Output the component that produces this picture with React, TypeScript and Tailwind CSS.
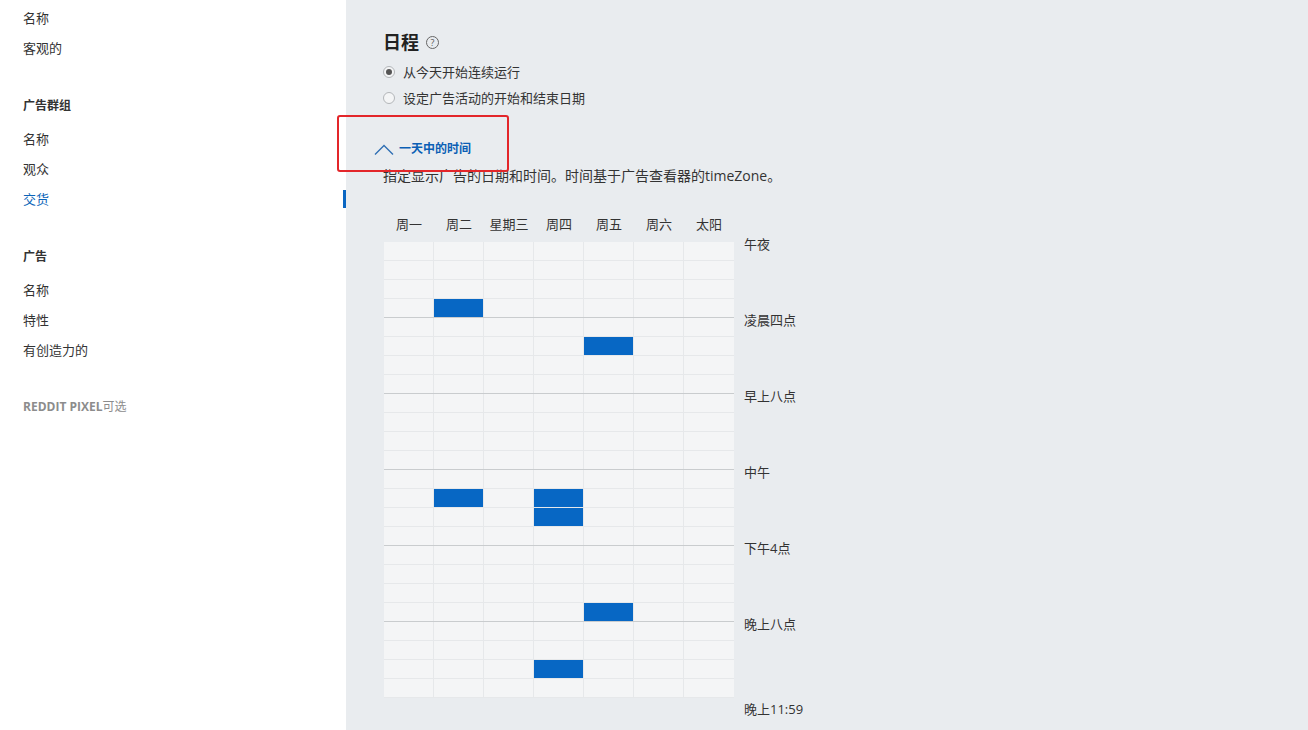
import React from "react";

const DAYS = ["周一", "周二", "星期三", "周四", "周五", "周六", "太阳"];
const TIMES = ["午夜", "凌晨四点", "早上八点", "中午", "下午4点", "晚上八点"];

// [row, day] of the selected hour slots
const SELECTED = new Set(["3-1", "5-4", "13-1", "13-3", "14-3", "19-4", "22-3"]);

function NavItem({ label, active }: { label: string; active?: boolean }) {
  return (
    <div className="flex items-center justify-between leading-[30px]">
      <span className={active ? "text-[#0b64b8]" : "text-[#333]"}>{label}</span>
      {active && <span className="h-[18px] w-[3px] bg-[#0a66c2]" />}
    </div>
  );
}

function NavHeading({ label }: { label: string }) {
  return <div className="mt-[28px] mb-[3px] text-[12px] font-bold leading-[30px] text-[#333]">{label}</div>;
}

function Radio({ checked, label }: { checked?: boolean; label: string }) {
  return (
    <label className="flex items-center gap-[8px] leading-[26px] text-[#333]">
      <span className="flex h-[12px] w-[12px] items-center justify-center rounded-full border border-[#b3b6b9] bg-[#f4f5f6]">
        {checked && <span className="h-[6px] w-[6px] rounded-full bg-[#555]" />}
      </span>
      {label}
    </label>
  );
}

function Sidebar() {
  return (
    <aside className="w-[346px] shrink-0 bg-white pl-[23px] pt-[3px] text-[13px]">
      <NavItem label="名称" />
      <NavItem label="客观的" />
      <NavHeading label="广告群组" />
      <NavItem label="名称" />
      <NavItem label="观众" />
      <NavItem label="交货" active />
      <NavHeading label="广告" />
      <NavItem label="名称" />
      <NavItem label="特性" />
      <NavItem label="有创造力的" />
      <div className="mt-[27px] text-[12px] font-bold leading-[30px] text-[#8c8c8c]">
        REDDIT PIXEL<span className="font-normal">可选</span>
      </div>
    </aside>
  );
}

function ScheduleGrid() {
  return (
    <div className="ml-[1px] flex gap-[10px]">
      <div className="w-[350px]">
        {Array.from({ length: 24 }, (_, row) => (
          <div
            key={row}
            className={
              "flex border-b " +
              (row % 4 === 3 && row < 23 ? "border-[#c9ccce]" : "border-[#e6e8ea]")
            }
          >
            {DAYS.map((_, day) => (
              <div
                key={day}
                className={
                  "h-[18px] w-[50px] border-r border-[#e6e8ea] last:border-r-0 " +
                  (SELECTED.has(`${row}-${day}`) ? "bg-[#0767c4]" : "bg-[#f4f5f6]")
                }
              />
            ))}
          </div>
        ))}
      </div>
      <div className="-mt-[8px] text-[13px] leading-[20px] text-[#333]">
        {TIMES.map((t) => (
          <div key={t} className="h-[76px]">
            {t}
          </div>
        ))}
        <div className="mt-[9px]">晚上11:59</div>
      </div>
    </div>
  );
}

export default function App() {
  return (
    <div
      className="relative flex h-[730px] w-full overflow-hidden"
      style={{ fontFamily: '"Open Sans", "Noto Sans CJK SC", sans-serif' }}
    >
      <Sidebar />
      <main className="flex-1 bg-[#e9ecef] pl-[37px] pt-[28px] text-[13px] text-[#333]">
        <div className="flex items-center gap-[7px]">
          <h1 className="text-[18px] font-bold leading-[28px] text-[#222]">日程</h1>
          <span className="mt-[1px] flex h-[13px] w-[13px] items-center justify-center rounded-full border border-[#666] text-[9px] leading-none text-[#555]">
            ?
          </span>
        </div>
        <div className="mt-[3px]">
          <Radio checked label="从今天开始连续运行" />
          <Radio label="设定广告活动的开始和结束日期" />
        </div>
        <button className="-ml-[9px] mt-[28px] flex items-center gap-[5px] text-[12px] font-bold leading-[20px] text-[#0b5fb5]">
          <svg width="20" height="11" viewBox="0 0 20 11" fill="none">
            <polyline points="1,10.5 10,1.5 19,10.5" stroke="#2f6fb4" strokeWidth="1.4" />
          </svg>
          一天中的时间
        </button>
        <p className="mt-[7px] text-[14px] leading-[20px]">指定显示广告的日期和时间。时间基于广告查看器的timeZone。</p>
        <div className="ml-[1px] mt-[28px] flex leading-[20px]">
          {DAYS.map((d) => (
            <div key={d} className="w-[50px] text-center">
              {d}
            </div>
          ))}
        </div>
        <div className="mt-[8px]">
          <ScheduleGrid />
        </div>
      </main>
      <div className="pointer-events-none absolute left-[337px] top-[115px] h-[57px] w-[172px] rounded-[3px] border-2 border-[#e3262a]" />
    </div>
  );
}
